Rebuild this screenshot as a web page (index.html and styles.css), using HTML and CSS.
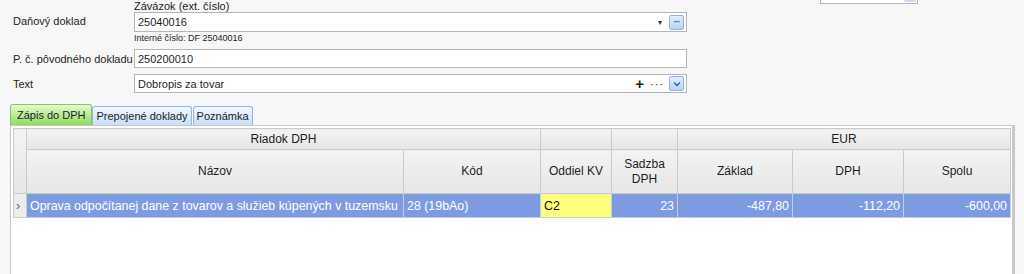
FILE: index.html
```html
<!DOCTYPE html>
<html lang="sk">
  <head>
    <meta charset="UTF-8" />
    <title>Daňový doklad</title>
    <link rel="stylesheet" href="styles.css">
  </head>
  <body>
    <div class="top">
      <div class="form">
        <!-- Daňový doklad -->
        <div class="row row-first">
          <label class="lbl">Daňový doklad</label>
          <div class="field">
            <div class="caption">Závázok (ext. číslo)</div>
            <div class="input">
              <span class="val">25040016</span>
              <span class="drop">&#9662;</span>
              <span class="btn">&middot;&middot;&middot;</span>
            </div>
            <div class="hint">Interné číslo: DF 25040016</div>
          </div>
        </div>

        <div class="row">
          <label class="lbl">P. č. pôvodného dokladu</label>
          <div class="input"><span class="val">250200010</span></div>
        </div>

        <div class="row row-last">
          <label class="lbl">Text</label>
          <div class="input">
            <span class="val">Dobropis za tovar</span>
            <span class="plus">+</span>
            <span class="dots">&middot;&middot;&middot;</span>
            <span class="btn">
              <svg width="8" height="6" viewBox="0 0 8 6"><path d="M1 1.5 L4 4.5 L7 1.5" fill="none" stroke="#3a5f9a" stroke-width="1.4"/></svg>
            </span>
          </div>
        </div>
      </div>

      <div class="side">
        <div class="side-box"><span class="side-btn"></span></div>
      </div>
    </div>

    <!-- záložky -->
    <div class="tabs">
      <span class="tab active">Zápis do DPH</span>
      <span class="tab">Prepojené doklady</span>
      <span class="tab">Poznámka</span>
    </div>

    <div class="panel">
      <table class="grid">
        <colgroup>
          <col style="width: 13px">
          <col style="width: 377px">
          <col style="width: 137px">
          <col style="width: 71px">
          <col style="width: 66px">
          <col style="width: 115px">
          <col style="width: 111px">
          <col style="width: 107px">
        </colgroup>
        <thead>
          <tr class="band">
            <th rowspan="2" class="ind"></th>
            <th colspan="2">Riadok DPH</th>
            <th></th>
            <th></th>
            <th colspan="3">EUR</th>
          </tr>
          <tr class="cols">
            <th>Názov</th>
            <th>Kód</th>
            <th>Oddiel KV</th>
            <th>Sadzba<br>DPH</th>
            <th>Základ</th>
            <th>DPH</th>
            <th>Spolu</th>
          </tr>
        </thead>
        <tbody>
          <tr class="sel">
            <td class="ind">&rsaquo;</td>
            <td>Oprava odpočítanej dane z tovarov a služieb kúpených v tuzemsku</td>
            <td>28 (19bAo)</td>
            <td class="edit">C2</td>
            <td class="num">23</td>
            <td class="num">-487,80</td>
            <td class="num">-112,20</td>
            <td class="num">-600,00</td>
          </tr>
        </tbody>
      </table>
    </div>
  </body>
</html>
```

FILE: styles.css
```css
body {
  margin: 0;
  background-color: #f7f7f7;
  font-family: Tahoma, "Liberation Sans", Arial, sans-serif;
  font-size: 11px;
  color: #1e1e1e;
  overflow: hidden;
}

.top {
  display: flex;
}

.form {
  width: 687px;
  padding-top: 1px;
}

.row {
  display: flex;
  align-items: center;
  margin-bottom: 6px;
}

.row-first {
  align-items: flex-start;
  margin-bottom: 5px;
}

.row-first .lbl {
  padding-top: 14px;
}

.row-last {
  margin-bottom: 0;
}

.lbl {
  width: 121px;
  padding-left: 13px;
  flex: none;
  white-space: nowrap;
}

.field {
  flex: 1;
}

.caption {
  font-size: 11px;
  line-height: 11px;
  height: 11px;
  color: #222;
}

.hint {
  font-size: 9px;
  line-height: 11px;
  margin-top: 1px;
}

.input {
  flex: 1;
  display: flex;
  align-items: center;
  height: 17px;
  border: 1px solid #b4b4b4;
  background-color: #fff;
  padding: 0 2px 0 3px;
}

.row-first .input {
  height: 18px;
}

.val {
  flex: 1;
}

.drop {
  font-size: 8px;
  color: #333;
  margin-right: 7px;
}

.plus {
  font-size: 15px;
  font-weight: bold;
  margin-right: 6px;
}

.dots {
  margin-right: 5px;
  letter-spacing: 1px;
}

.btn {
  width: 13px;
  height: 13px;
  border: 1px solid #8fb3e4;
  border-radius: 2px;
  background: linear-gradient(#e2efff, #b7d3f7);
  color: #2f5aa0;
  font-size: 9px;
  font-weight: bold;
  line-height: 11px;
  text-align: center;
  display: flex;
  align-items: center;
  justify-content: center;
  letter-spacing: -1px;
}

.side {
  flex: 1;
  position: relative;
}

.side-box {
  position: absolute;
  left: 133px;
  top: -12px;
  width: 96px;
  height: 14px;
  border: 1px solid #b4b4b4;
  background-color: #fff;
}

.side-btn {
  position: absolute;
  right: 1px;
  top: 0;
  width: 12px;
  height: 13px;
  background: #c6dcf7;
  border-radius: 2px;
}

.tabs {
  display: flex;
  padding-left: 10px;
  margin-top: 11px;
  height: 21px;
  align-items: flex-end;
}

.tab {
  height: 18px;
  line-height: 18px;
  padding: 0 3px;
  margin-right: 1px;
  border: 1px solid #8fb8e6;
  border-bottom: none;
  border-radius: 3px 3px 0 0;
  background: linear-gradient(#f2f8ff, #c7def8);
}

.tab.active {
  height: 20px;
  line-height: 20px;
  padding: 0 6px;
  margin-right: 0;
  border-color: #86c75a;
  background: linear-gradient(#e4f9cf, #8edb5c);
}

.panel {
  margin-left: 10px;
  width: 999px;
  height: 160px;
  border: 1px solid #c8c8c8;
  border-right-width: 3px;
  background-color: #fff;
  padding: 2px 0 0 2px;
}

.grid {
  border-collapse: collapse;
  table-layout: fixed;
  width: 997px;
}

.grid th {
  font-weight: normal;
  font-size: 12px;
  background: linear-gradient(#f3f3f3, #e6e6e6);
  border: 1px solid #cacaca;
  text-align: center;
  padding: 0;
}

.band th {
  height: 20px;
}

.cols th {
  height: 43px;
  line-height: 15px;
}

.grid td {
  height: 23px;
  padding: 0 3px;
  border: 1px solid #c3cde8;
  white-space: nowrap;
  overflow: hidden;
  font-size: 12.4px;
}

.sel td {
  background-color: #7d9be0;
  color: #fff;
}

.grid td.ind {
  background: #ececec;
  color: #666;
  padding: 0 2px;
  font-size: 13px;
  border-color: #cacaca;
}

.grid td.edit {
  background-color: #ffff7e;
  color: #111;
}

.num {
  text-align: right;
}
```
